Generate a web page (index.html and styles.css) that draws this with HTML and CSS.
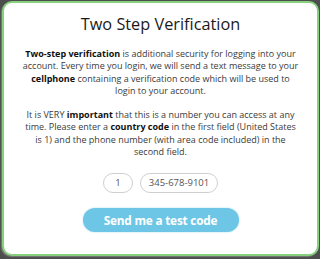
FILE: index.html
```html
<!DOCTYPE html>
<html>
<head>
<meta charset="utf-8">
<link rel="stylesheet" href="styles.css">
</head>
<body>
<div class="frame">
  <div class="card">
    <h1 class="title">Two Step Verification</h1>
    <p class="text"><b>Two-step verification</b> is additional security for logging into your<br>account. Every time you login, we will send a text message to your<br><b>cellphone</b> containing a verification code which will be used to<br>login to your account.</p>
    <p class="text">It is VERY <b>important</b> that this is a number you can access at any<br>time. Please enter a <b>country code</b> in the first field (United States<br>is 1) and the phone number (with area code included) in the<br>second field.</p>
    <div class="fields">
      <div class="field field-code">1</div>
      <div class="field field-phone">345-678-9101</div>
    </div>
    <div class="actions">
      <button class="btn">Send me a test code</button>
    </div>
  </div>
</div>
</body>
</html>
```
FILE: styles.css
```css
html, body {
  margin: 0;
  padding: 0;
  background: #4d4d4d;
  width: 320px;
  height: 259px;
  overflow: hidden;
}
.frame {
  padding: 1px 1px 3px 2px;
  height: 259px;
  box-sizing: border-box;
  display: flex;
}
.card {
  flex: 1;
  background: #fff;
  border: 2px solid #86d07e;
  border-radius: 10px;
  box-shadow: -1px 1px 1px #7a7a7a;
  font-family: "Open Sans", sans-serif;
  color: #3a3a3a;
  text-align: center;
  padding: 0;
  display: flex;
  flex-direction: column;
  align-items: center;
}
.title {
  margin: 8px 0 0;
  font-size: 16.3px;
  font-weight: 400;
  color: #1a1a1a;
  line-height: 26px;
}
.text {
  width: 296px;
  margin: 10.7px 0 0;
  font-size: 9px;
  line-height: 12.6px;
  white-space: nowrap;
}
.text b {
  color: #111;
}
.text + .text {
  margin-top: 10.6px;
}
.fields {
  display: flex;
  justify-content: center;
  gap: 7px;
  margin-top: 14px;
}
.field {
  height: 20px;
  box-sizing: border-box;
  border: 1px solid #cfcfcf;
  border-radius: 10px;
  font-size: 9.5px;
  line-height: 18px;
  color: #555;
}
.field-code { width: 30px; }
.field-phone { width: 78px; }
.actions {
  margin-top: 15px;
  display: flex;
  justify-content: center;
}
.btn {
  width: 156px;
  height: 24px;
  border: none;
  border-radius: 12px;
  background: #6ec6e6;
  color: #fff;
  font-family: "Open Sans", sans-serif;
  font-weight: 700;
  font-size: 11.8px;
  letter-spacing: -0.2px;
  padding: 0;
  box-shadow: 0 0 2px #a8dcef;
}
```
